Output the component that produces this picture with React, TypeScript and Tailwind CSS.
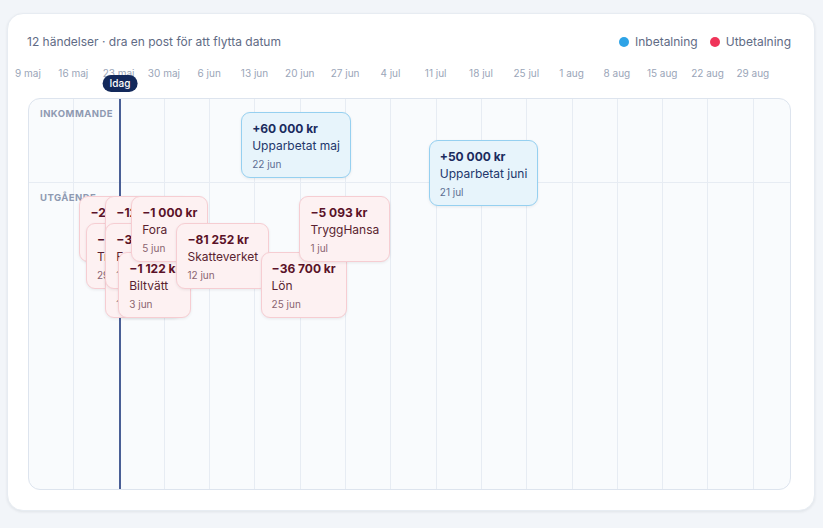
import React from "react"

// px per day on the timeline, and the card offset relative to the chart's inner box
const DAY = 6.47
const WEEK = 45.3
const cardLeft = (d: number) => -72.5 + d * DAY

const TICKS = [
  "9 maj", "16 maj", "23 maj", "30 maj", "6 jun", "13 jun", "20 jun", "27 jun", "4 jul",
  "11 jul", "18 jul", "25 jul", "1 aug", "8 aug", "15 aug", "22 aug", "29 aug",
]

type Ev = { amount: string; name: string; date: string; day: number; top: number; income?: boolean }

const EVENTS: Ev[] = [
  { amount: "+60 000 kr", name: "Upparbetat maj", date: "22 jun", day: 44, top: 13, income: true },
  { amount: "+50 000 kr", name: "Upparbetat juni", date: "21 jul", day: 73, top: 41, income: true },
  { amount: "−2 400 kr", name: "Hyra förråd", date: "28 maj", day: 19, top: 97 },
  { amount: "−990 kr", name: "Tre", date: "29 maj", day: 20, top: 124 },
  { amount: "−12 500 kr", name: "Hyra", date: "1 jun", day: 23, top: 97 },
  { amount: "−1 850 kr", name: "Telia", date: "1 jun", day: 23, top: 153 },
  { amount: "−3 200 kr", name: "Fortnox", date: "1 jun", day: 23, top: 124 },
  { amount: "−1 122 kr", name: "Biltvätt", date: "3 jun", day: 25, top: 153 },
  { amount: "−1 000 kr", name: "Fora", date: "5 jun", day: 27, top: 97 },
  { amount: "−81 252 kr", name: "Skatteverket", date: "12 jun", day: 34, top: 124 },
  { amount: "−36 700 kr", name: "Lön", date: "25 jun", day: 47, top: 153 },
  { amount: "−5 093 kr", name: "TryggHansa", date: "1 jul", day: 53, top: 97 },
]

function EventCard({ ev }: { ev: Ev }) {
  const tone = ev.income
    ? "bg-[#e7f4fb] border-[#96d0f0]"
    : "bg-[#fdf1f2] border-[#f6cdd2]"
  return (
    <div
      className={`absolute whitespace-nowrap rounded-[9px] border px-[10px] pt-[7px] pb-[5px] shadow-[0_1px_3px_rgba(15,23,42,0.08)] cursor-grab ${tone}`}
      style={{ left: cardLeft(ev.day), top: ev.top }}
    >
      <p className={`text-[12px] font-bold leading-[17px] ${ev.income ? "text-[#1a2b5e]" : "text-[#5a1228]"}`}>
        {ev.amount}
      </p>
      <p className={`text-[12px] leading-[18px] ${ev.income ? "text-[#22376b]" : "text-[#5a1f30]"}`}>
        {ev.name}
      </p>
      <p className={`mt-[1px] text-[10px] leading-[16px] ${ev.income ? "text-[#5d6e92]" : "text-[#8a6470]"}`}>
        {ev.date}
      </p>
    </div>
  )
}

export default function App() {
  return (
    <div className="min-h-screen bg-[#f2f5f9] pt-[13px] pl-[7px] font-['Inter','Noto_Sans',sans-serif]">
      <div className="w-[808px] h-[498px] rounded-2xl border border-[#e7ecf2] bg-white pl-[19px] pr-[23px] pt-5 shadow-[0_1px_3px_rgba(15,23,42,0.08)]">
        {/* HEADER */}
        <div className="flex h-4 items-center justify-between">
          <p className="text-[12px] text-[#5f6b85]">12 händelser · dra en post för att flytta datum</p>
          <div className="flex items-center gap-3 text-[12px] text-[#5f6b85]">
            <span className="flex items-center gap-[6px]">
              <span className="h-[10px] w-[10px] rounded-full bg-[#2ea3e6]" />
              Inbetalning
            </span>
            <span className="flex items-center gap-[6px]">
              <span className="h-[10px] w-[10px] rounded-full bg-[#ef3459]" />
              Utbetalning
            </span>
          </div>
        </div>

        {/* AXIS */}
        <div className="relative ml-[1px] mt-4 h-[32px]">
          {TICKS.map((t, i) => (
            <span
              key={t}
              className="absolute top-0 -translate-x-1/2 whitespace-nowrap text-[10px] leading-[14px] text-[#9aa5b8]"
              style={{ left: i * WEEK }}
            >
              {t}
            </span>
          ))}
          <span className="absolute left-[92px] top-[9px] z-10 -translate-x-1/2 rounded-full bg-[#13295b] px-[7px] text-[10px] font-medium leading-[17px] text-white">
            Idag
          </span>
        </div>

        {/* CHART */}
        <div className="relative ml-[1px] h-[392px] w-[763px] overflow-hidden rounded-xl border border-[#dde4ee] bg-[#f9fbfd]">
          <div className="absolute inset-0 flex">
            {Array.from({ length: 17 }).map((_, i) => (
              <div key={i} className="h-full w-[45.3px] shrink-0 border-r border-[#e7ecf3]" />
            ))}
          </div>
          <div className="relative h-[84px] border-b border-[#e7ecf3]">
            <span className="absolute left-[11px] top-[8px] text-[9.5px] font-bold tracking-[0.05em] text-[#8e99b1]">INKOMMANDE</span>
          </div>
          <span className="absolute left-[11px] top-[92px] text-[9.5px] font-bold tracking-[0.05em] text-[#8e99b1]">UTGÅENDE</span>

          {/* TODAY */}
          <div className="absolute bottom-0 left-[90px] top-0 w-[2px] bg-[#4a5f96]" />

          {EVENTS.map((ev) => (
            <EventCard key={ev.amount + ev.name} ev={ev} />
          ))}
        </div>
      </div>
    </div>
  )
}
